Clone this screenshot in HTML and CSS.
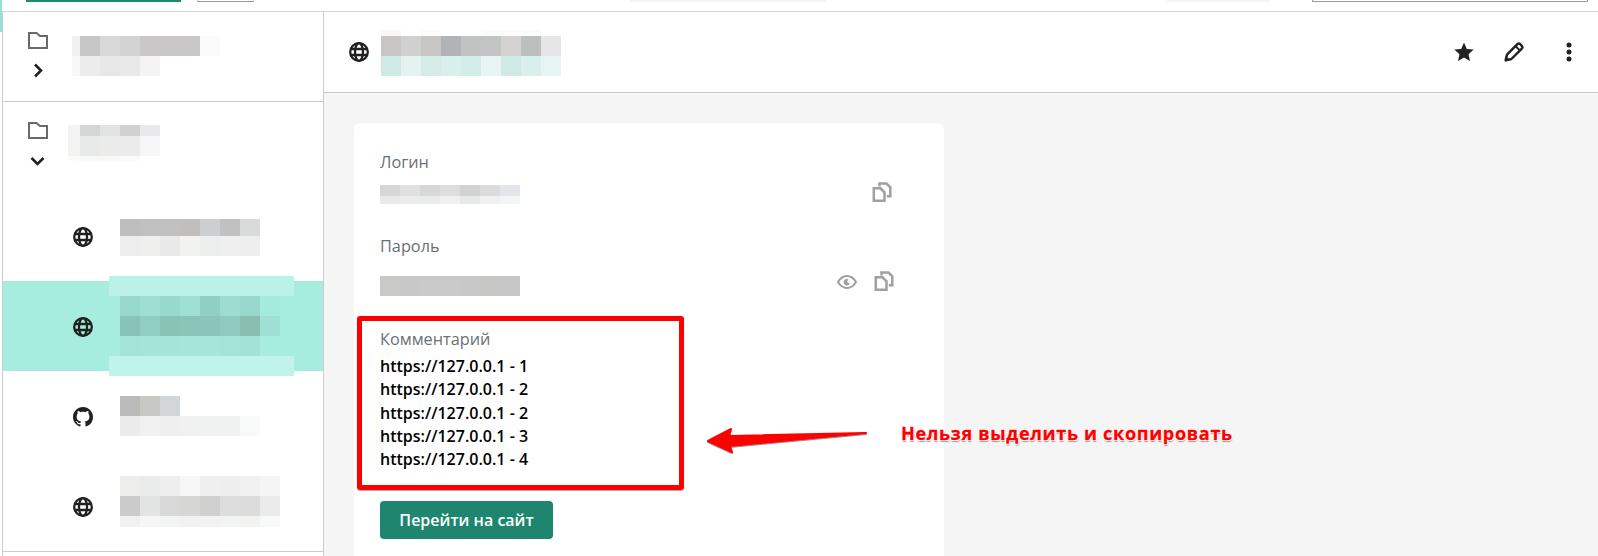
FILE: index.html
```html
<!DOCTYPE html>
<html>
<head>
    <title>Пароли</title>
    <link rel="stylesheet" href="styles.css">
</head>
<body>
    <svg class="icon-defs" width="0" height="0">
        <symbol id="i-folder" viewBox="0 0 20 17"><path d="M1 1h7.500l3.500 3h7v12H1z" fill="none" stroke="#6a6a6a" stroke-width="2"/></symbol>
        <symbol id="i-globe" viewBox="0 0 20 20"><g fill="none" stroke="#212121" stroke-width="2.300"><circle cx="10" cy="10" r="8.800"/><ellipse cx="10" cy="10" rx="4" ry="8.800"/><path d="M1.500 7h17M1.500 13h17"/></g></symbol>
        <symbol id="i-github" viewBox="0 0 16 16"><path fill="#212121" d="M8 0C3.58 0 0 3.58 0 8c0 3.54 2.29 6.53 5.47 7.59.4.07.55-.17.55-.38 0-.19-.01-.82-.01-1.49-2.01.37-2.53-.49-2.69-.94-.09-.23-.48-.94-.82-1.13-.28-.15-.68-.52-.01-.53.63-.01 1.08.58 1.23.82.72 1.21 1.87.87 2.33.66.07-.52.28-.87.51-1.07-1.78-.2-3.64-.89-3.64-3.95 0-.87.31-1.59.82-2.15-.08-.2-.36-1.02.08-2.12 0 0 .67-.21 2.2.82.64-.18 1.32-.27 2-.27.68 0 1.36.09 2 .27 1.53-1.04 2.2-.82 2.2-.82.44 1.1.16 1.92.08 2.12.51.56.82 1.27.82 2.15 0 3.07-1.87 3.75-3.65 3.95.29.25.54.73.54 1.48 0 1.07-.01 1.93-.01 2.2 0 .21.15.46.55.38A8.013 8.013 0 0016 8c0-4.42-3.58-8-8-8z"/></symbol>
        <symbol id="i-copy" viewBox="0 0 20 22"><g fill="none" stroke="#a0a0a0" stroke-width="2.500"><path d="M1.800 6.300h6.700l4 4v8.500H1.800z"/><path d="M7.500 4.500V1.500h7l3.800 3.800v9h-3.500"/></g></symbol>
    </svg>

    <div class="rail-accent"></div>

    <div class="topbar">
        <span class="top-btn top-btn-green"></span>
        <span class="top-btn top-btn-grey"></span>
        <span class="top-chip top-chip-a"></span>
        <span class="top-chip top-chip-b"></span>
        <span class="top-input"></span>
    </div>

    <div class="layout">
        <div class="sidebar">
            <div class="folder-row folder-closed">
                <div class="folder-icons">
                    <svg class="folder-icon"><use href="#i-folder"/></svg>
                    <svg class="chevron chevron-right" viewBox="0 0 10 15"><path d="M2 1.500 8 7.500 2 13.500" fill="none" stroke="#212121" stroke-width="2.600"/></svg>
                </div>
                <div class="mosaic m-folder-a" data-rows="20:f0f0f0/8,c6c6c6,d8d8d8,d2d3d2,c9c7c7,c9c7c7,c9c7c7,fbfbfe;20:f8f8f8/8,ececec,e7e7e7,e8e9e8,f3f3f3"></div>
            </div>
            <div class="folder-row folder-open">
                <div class="folder-icons">
                    <svg class="folder-icon"><use href="#i-folder"/></svg>
                    <svg class="chevron chevron-down" viewBox="0 0 15 10"><path d="M1.500 2 7.500 8 13.500 2" fill="none" stroke="#212121" stroke-width="2.600"/></svg>
                </div>
                <div class="mosaic m-folder-b" data-rows="11:f3f3f3/12,d6d5d5,e2e3e3,d2d1d1,e9e9eb;20:f3f3f2/12,e8e9e9,ebebea,ebebeb,f5f6f5;5:fbfbfb/12,f8f8f8,f8f8f8,fafafa"></div>
            </div>

            <div class="entry">
                <svg class="entry-icon"><use href="#i-globe"/></svg>
                <div class="mosaic m-entry-a" data-rows="17:bcbdbc,c0c0c0,c0c0c0,c0bfbe,cdced0,c1c1c1,d9dada;20:ededed,efefee,e9e9e9,f2f2f1,eceded,efefef,eeeeee"></div>
            </div>
            <div class="entry entry-active">
                <svg class="entry-icon"><use href="#i-globe"/></svg>
                <div class="mosaic m-entry-b" data-rows="20:bbf1e7/185;20:a7eddf/11,97d8cb,9fdfd2,97d9cb,9fe0d3,8fd0c3,9edcd0,98d8ca,a5ebdd;20:a7eddf/11,88c3b8,90cec1,88c4b5,88c5b7,8bc5ba,90cbbf,88bfb1,a0e0d3;20:a7eddf/11,a3e3d8,a4e5d9,a4e5d9,a5e6da,a5e6da,a4e4d8,a3e2d6;20:c0f3ea/185"></div>
            </div>
            <div class="entry">
                <svg class="entry-icon"><use href="#i-github"/></svg>
                <div class="mosaic m-entry-c" data-rows="20:bababa,c8c8c4,d3d6d9;20:ebebeb,f1f1f1,efefef,f0f0f0,f0f1f1,f0f1f1,f8f9f9"></div>
            </div>
            <div class="entry entry-last">
                <svg class="entry-icon"><use href="#i-globe"/></svg>
                <div class="mosaic m-entry-d" data-rows="20:ededec,e9ebeb,eeeeee,f6f6f6,efefef,eeeeee,f0f0f0,f5f5f5;20:cbcbcb,e2e3e3,d8d8d8,d6d6d5,cfcfcf,dddddd,dbdbdb,eaeaea;11:f1f1f1,f6f6f6,f2f3f3,f1f1f1,f2f2f2,f2f3f3,f2f2f1,f8f9f9"></div>
            </div>
        </div>

        <div class="main">
            <div class="main-header">
                <svg class="header-globe"><use href="#i-globe"/></svg>
                <div class="mosaic m-title" data-rows="6:f8f8f8,ffffff,fbfbfb,ffffff,ffffff,fbfbfb,fbfbfb,fbfbfb;20:c8c6c5,d0d0d0,c8c6c4,b2b3b6,c1c2c2,c2c3c3,d3d2d0,bdbfbe,e6e6e6;20:cfeae5,e3f3ef,d5ece6,d9efeb,d2ede7,e6f5f1,cfe9e4,d9efeb,e6f5f1"></div>
                <div class="header-actions">
                    <svg class="action action-star" viewBox="0 0 20 20"><path fill="#212121" d="M10 .5l2.800 6.400 6.900.7-5.200 4.600 1.500 6.800-6-3.500-6 3.500 1.500-6.800L.3 7.600l6.900-.7z"/></svg>
                    <svg class="action action-pencil" viewBox="0 0 20 20"><path d="M1.600 18.400 3 12.600 13.400 2.200a2 2 0 0 1 2.800 0l1.600 1.600a2 2 0 0 1 0 2.800L7.400 17z" fill="none" stroke="#212121" stroke-width="2.400" stroke-linejoin="round"/><path d="M11.600 4.200l4.200 4.200" stroke="#212121" stroke-width="2"/><path d="M1 19l.9-5 4.100 4.100z" fill="#212121"/></svg>
                    <svg class="action action-dots" viewBox="0 0 6 20"><circle cx="3" cy="3" r="2.500" fill="#212121"/><circle cx="3" cy="10" r="2.500" fill="#212121"/><circle cx="3" cy="17" r="2.500" fill="#212121"/></svg>
                </div>
            </div>

            <div class="main-body">
                <div class="card">
                    <div class="field field-login">
                        <div class="field-label">Логин</div>
                        <div class="field-value">
                            <div class="mosaic" data-rows="11:d7d6d6,dfe1e1,d6d7d7,dddddc,d1d3d2,dcdbd9,e2e6ea;8:e9e9e9,ebebeb,e9eaea,f0f0f0,e7e8e8,f0f0f0,f3f4f4"></div>
                            <svg class="copy-icon"><use href="#i-copy"/></svg>
                        </div>
                    </div>
                    <div class="field field-password">
                        <div class="field-label">Пароль</div>
                        <div class="field-value">
                            <div class="mosaic" data-rows="20:c9c9c8,c8c8c8,c9c9c9,c9c9c9,c8c8c8,c7c7c6,c7c7c7"></div>
                            <svg class="eye-icon" viewBox="0 0 20 14"><path d="M1 7c2.400-4 5.400-6 9-6s6.600 2 9 6c-2.400 4-5.400 6-9 6s-6.600-2-9-6z" fill="none" stroke="#9e9e9e" stroke-width="2"/><path d="M12.800 8.500A3.200 3.200 0 1 1 11.500 4.300L10 7z" fill="#9e9e9e"/></svg>
                            <svg class="copy-icon"><use href="#i-copy"/></svg>
                        </div>
                    </div>
                    <div class="field field-comment">
                        <div class="field-label">Комментарий</div>
                        <div class="comment-text">
                            <div>https://127.0.0.1 - 1</div>
                            <div>https://127.0.0.1 - 2</div>
                            <div>https://127.0.0.1 - 2</div>
                            <div>https://127.0.0.1 - 3</div>
                            <div>https://127.0.0.1 - 4</div>
                        </div>
                    </div>
                    <button class="go-button">Перейти на сайт</button>
                </div>
            </div>
        </div>
    </div>

    <!-- screenshot annotations -->
    <div class="note-box"></div>
    <svg class="note-arrow" viewBox="0 0 170 40" width="170" height="40">
        <defs>
            <filter id="arrowShadow" x="-5%" y="-20%" width="110%" height="150%"><feDropShadow dx="0" dy="1" stdDeviation="0.7" flood-color="#000" flood-opacity="0.45"/></filter>
        </defs>
        <path filter="url(#arrowShadow)" fill="#fe0000" stroke="#fe0000" stroke-width="2" stroke-linejoin="round" d="M4 20 27 8 25 15 162 12 26 25 28 31z"/>
    </svg>
    <div class="note-text">Нельзя выделить и скопировать</div>

    <script src="mosaic.js"></script>
</body>
</html>
```

FILE: styles.css
```css
html, body {
    margin: 0;
    padding: 0;
    background: #fff;
    overflow: hidden;
}

body {
    font-family: "Open Sans", "Noto Sans", sans-serif;
    width: 1598px;
    height: 556px;
    position: relative;
    color: #000;
}

.icon-defs {
    position: absolute;
}

.rail-accent {
    position: absolute;
    left: 0;
    top: 0;
    width: 2px;
    height: 32px;
    background: #8fe5d2;
}

/* top bar, only its lower edge is in view */
.topbar {
    height: 11px;
    border-bottom: 1px solid #d6d6d6;
    display: flex;
    align-items: flex-start;
}

.top-btn, .top-chip, .top-input {
    display: block;
    height: 2px;
}

.top-btn-green {
    width: 155px;
    margin-left: 26px;
    background: #1e8a6f;
}

.top-btn-grey {
    width: 55px;
    margin-left: 16px;
    background: #fff;
    border-bottom: 1px solid #999;
    border-left: 1px solid #ccc;
    border-right: 1px solid #ccc;
    height: 1px;
}

.top-chip {
    background: #f5f5f5;
}

.top-chip-a {
    width: 196px;
    margin-left: 376px;
}

.top-chip-b {
    width: 102px;
    margin-left: 341px;
}

.top-input {
    width: 274px;
    margin-left: 43px;
    height: 1px;
    border: 1px solid #999;
    border-top: none;
}

.layout {
    display: flex;
    height: 544px;
}

/* sidebar */
.sidebar {
    margin-left: 2px;
    width: 320px;
    flex-shrink: 0;
    border-left: 1px solid #ccc;
    border-right: 1px solid #ccc;
}

.mosaic {
    flex-shrink: 0;
}

.mosaic-row {
    display: flex;
}

.folder-row {
    display: flex;
    align-items: flex-start;
    box-sizing: border-box;
}

.folder-closed {
    height: 90px;
    border-bottom: 1px solid #ccc;
}

.folder-open {
    height: 89px;
}

.folder-icons {
    width: 45px;
    margin-left: 25px;
    flex-shrink: 0;
}

.folder-icon {
    display: block;
    width: 20px;
    height: 17px;
}

.chevron {
    display: block;
}

.folder-closed .folder-icons {
    padding-top: 20px;
}

.folder-closed .chevron {
    width: 10px;
    height: 15px;
    margin: 14px 0 0 5px;
}

.folder-open .folder-icons {
    padding-top: 20px;
}

.folder-open .chevron {
    width: 15px;
    height: 10px;
    margin: 17px 0 0 2px;
}

.folder-closed .mosaic {
    margin: 24px 0 0 -1px;
}

.folder-open .mosaic {
    margin: 23px 0 0 -5px;
}

.entry {
    height: 90px;
    display: flex;
    align-items: flex-start;
    padding-left: 70px;
    box-sizing: border-box;
}

.entry-last {
    border-bottom: 1px solid #ccc;
    height: 91px;
}

.entry-active {
    background: #a7eddf;
}

.entry-icon {
    width: 20px;
    height: 20px;
    margin-top: 36px;
    flex-shrink: 0;
}

.m-entry-a {
    margin: 28px 0 0 27px;
}

.m-entry-b {
    margin: -5px 0 0 16px;
}

.m-entry-c {
    margin: 25px 0 0 27px;
}

.m-entry-d {
    margin: 15px 0 0 27px;
}

/* main area */
.main {
    flex: 1;
    min-width: 0;
}

.main-header {
    height: 80px;
    border-bottom: 1px solid #ccc;
    display: flex;
    align-items: center;
    background: #fff;
    padding-left: 25px;
}

.header-globe {
    width: 20px;
    height: 20px;
    flex-shrink: 0;
}

.m-title {
    margin: 2px 0 0 12px;
}

.header-actions {
    margin-left: auto;
    display: flex;
    align-items: center;
    padding-right: 26px;
}

.action {
    display: block;
    height: 20px;
}

.action-star {
    width: 20px;
}

.action-pencil {
    width: 20px;
    margin-left: 30px;
}

.action-dots {
    width: 6px;
    margin-left: 42px;
}

.main-body {
    background: #f5f5f5;
    height: 463px;
    padding: 30px 0 0 30px;
    box-sizing: border-box;
    overflow: hidden;
}

.card {
    width: 590px;
    height: 445px;
    background: #fff;
    border-radius: 6px;
    padding: 0 26px;
    box-sizing: border-box;
    display: flow-root;
}

.field-label {
    font-size: 16.300px;
    line-height: 22px;
    color: #6b7075;
}

.field-login {
    margin-top: 28px;
}

.field-password {
    margin-top: 19px;
}

.field-comment {
    margin-top: 10px;
}

.field-value {
    display: flex;
    align-items: flex-start;
}

.field-login .field-value {
    margin-top: 12px;
    height: 31px;
}

.field-login .copy-icon {
    margin: -3px 0 0 352px;
}

.field-password .field-value {
    margin-top: 19px;
    height: 42px;
}

.field-password .copy-icon {
    margin: -5px 0 0 17px;
}

.copy-icon {
    width: 20px;
    height: 22px;
    flex-shrink: 0;
    display: block;
}

.eye-icon {
    width: 20px;
    height: 14px;
    flex-shrink: 0;
    margin: -1px 0 0 317px;
}

.comment-text {
    margin-top: 5px;
    font-size: 16px;
    line-height: 23.300px;
    font-weight: 600;
    color: #000;
}

.go-button {
    display: block;
    margin-top: 29.500px;
    width: 173px;
    height: 38px;
    background: #1e866f;
    color: #fff;
    border: none;
    border-radius: 4px;
    font-family: inherit;
    font-size: 16px;
    font-weight: 600;
    padding: 0;
}

/* annotations over the shot */
.note-box {
    position: absolute;
    left: 357px;
    top: 316px;
    width: 327px;
    height: 174px;
    box-sizing: border-box;
    border: 5px solid #fe0000;
    border-radius: 3px;
    box-shadow: 0 1px 1px rgba(0, 0, 0, 0.35);
}

.note-arrow {
    position: absolute;
    left: 704px;
    top: 421px;
}

.note-text {
    position: absolute;
    left: 901px;
    top: 421px;
    font-size: 18px;
    line-height: 24px;
    font-weight: 700;
    letter-spacing: 0.7px;
    color: #fe0000;
    white-space: nowrap;
    -webkit-text-stroke: 0.3px #fe0000;
    text-shadow: -1px -1px 0 #fff, 1px -1px 0 #fff, -1px 1px 0 #fff, 1px 1px 0 #fff, 0 2px 1px #aaa, 1px 2px 1px #bbb;
}
```

FILE: mosaic.js
```js
// Draws the pixelated (censored) text blocks from their data-rows strings.
// Row format: height:color,color/width,... (default cell width 20px)
document.querySelectorAll('.mosaic').forEach(function (block) {
    block.dataset.rows.split(';').forEach(function (row) {
        const parts = row.split(':');
        const rowEl = document.createElement('div');
        rowEl.className = 'mosaic-row';
        rowEl.style.height = parts[0] + 'px';
        parts[1].split(',').forEach(function (cell) {
            const bits = cell.split('/');
            const cellEl = document.createElement('div');
            cellEl.style.width = (bits[1] || 20) + 'px';
            cellEl.style.background = '#' + bits[0];
            rowEl.appendChild(cellEl);
        });
        block.appendChild(rowEl);
    });
});
```
